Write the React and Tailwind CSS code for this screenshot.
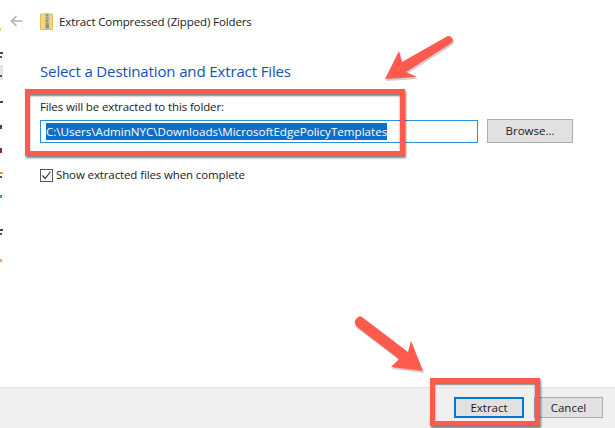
import React from 'react';

const FONT = "font-['Open_Sans','Noto_Sans',sans-serif]";

// bits of the window behind, visible on the left edge
const SPECKS = [
  { top: 28, w: 1, h: 3, color: '#f5d060' },
  { top: 52, w: 3, h: 2, color: '#444444' },
  { top: 56, w: 2, h: 2, color: '#555555' },
  { top: 65, w: 3, h: 15, color: '#e4e4e4' },
  { top: 75, w: 2, h: 2, color: '#555555' },
  { top: 101, w: 3, h: 2, color: '#444444' },
  { top: 125, w: 2, h: 4, color: '#6a2a7a' },
  { top: 148, w: 2, h: 5, color: '#8a1f4a' },
  { top: 172, w: 3, h: 2, color: '#e0a030' },
  { top: 176, w: 2, h: 2, color: '#555555' },
  { top: 195, w: 2, h: 3, color: '#4a90d9' },
  { top: 229, w: 3, h: 2, color: '#444444' },
  { top: 233, w: 2, h: 2, color: '#555555' },
  { top: 259, w: 2, h: 3, color: '#f0b040' },
];

function ZipIcon() {
  return (
    <svg width="13" height="17" viewBox="0 0 13 17" className="shrink-0">
      <path d="M0.5 1 H12.5 V16.5 H0.5 Z" fill="#f9d976" stroke="#e2bd5c" strokeWidth="1" />
      <rect x="5" y="0.5" width="4.5" height="16" fill="#b9b9b0" />
      <path d="M6 2h2M6.5 5h2M6 8h2M6.5 11h2" stroke="#6f6f68" strokeWidth="1.2" />
      <rect x="5.8" y="11.5" width="3" height="3.5" fill="#8c8c84" />
    </svg>
  );
}

function BackArrow() {
  return (
    <svg width="13" height="12" viewBox="0 0 13 12" className="shrink-0">
      <path d="M12.5 6 H1.5 M6.5 1 L1.5 6 L6.5 11" fill="none" stroke="#b4b4b4" strokeWidth="1.7" />
    </svg>
  );
}

// red callout arrow
function Callout({ className, width, height, d }) {
  return (
    <svg width={width} height={height} viewBox={`0 0 ${width} ${height}`} className={className}>
      <path d={d} fill="#8a8a8a" opacity="0.4" transform="translate(1 2)" />
      <path d={d} fill="#ff5a4e" />
    </svg>
  );
}

export default function App() {
  return (
    <div className={`${FONT} relative w-[615px] h-[428px] overflow-hidden bg-white flex flex-col text-[#1a1a1a]`}>
      <div className="flex-1 pl-[10px] pt-[12px]">
        <div className="flex items-center h-[18px]">
          <BackArrow />
          <div className="ml-[17px]"><ZipIcon /></div>
          <span className="ml-[6px] mt-[1px] text-[11.5px] tracking-[-0.12px] leading-none whitespace-nowrap">Extract Compressed (Zipped) Folders</span>
        </div>

        <div className="pl-[30px]">
          <h1 className="mt-[31px] text-[15px] tracking-[-0.13px] leading-[20px] text-[#1450b8] whitespace-nowrap">Select a Destination and Extract Files</h1>
          <p className="mt-[18px] text-[11.5px] tracking-[-0.13px] leading-[16px] whitespace-nowrap">Files will be extracted to this folder:</p>

          <div className="mt-[4px] flex items-center">
            <div className="w-[438px] h-[23px] border border-[#2b8fe0] flex items-center pl-[5px]">
              <span className="bg-[#0f6fc6] text-white text-[11.6px] leading-[17px] whitespace-nowrap">C:\Users\AdminNYC\Downloads\MicrosoftEdgePolicyTemplates</span>
            </div>
            <button className="ml-[9px] w-[86px] h-[24px] bg-[#e1e1e1] border border-[#adadad] text-[11.5px]">Browse...</button>
          </div>

          <label className="mt-[24px] flex items-center">
            <span className="w-[13px] h-[13px] border border-[#555] flex items-center justify-center">
              <svg width="11" height="11" viewBox="0 0 11 11">
                <path d="M1.5 5.5 L4.2 8.5 L9.5 1.5" fill="none" stroke="#333" strokeWidth="1.2" />
              </svg>
            </span>
            <span className="ml-[3px] text-[11.5px] tracking-[-0.12px] leading-[16px] whitespace-nowrap">Show extracted files when complete</span>
          </label>
        </div>
      </div>

      <div className="h-[41px] bg-[#f0f0f0] border-t border-[#dfdfdf] flex items-start justify-end pt-[9px] pr-[12px] gap-[10px]">
        <button className="w-[70px] h-[21px] bg-[#e1e1e1] border-2 border-[#0078d7] text-[11.5px] leading-none">Extract</button>
        <button className="w-[69px] h-[21px] bg-[#e1e1e1] border border-[#adadad] text-[11.5px] leading-none">Cancel</button>
      </div>

      {/* annotations on top of the dialog */}
      <div className="absolute left-[25px] top-[89px] w-[380px] h-[67px] border-[5px] border-[#ff5a4e] shadow-[1px_2px_2px_rgba(0,0,0,0.5),inset_0_2px_2px_rgba(0,0,0,0.5)]" />
      <div className="absolute left-[430px] top-[378px] w-[110px] h-[48px] border-[5px] border-[#ff5a4e] shadow-[1px_2px_2px_rgba(0,0,0,0.5),inset_0_2px_2px_rgba(0,0,0,0.5)]" />
      <Callout
        className="absolute left-[380px] top-[34px]"
        width={76}
        height={50}
        d="M68 2 Q72 2 73 6 Q73 8 70 10 L26 38 L37 43 L5 45 L19 17 L22 28 L66 3 Z"
      />
      <Callout
        className="absolute left-[352px] top-[314px]"
        width={78}
        height={62}
        d="M10 3 L56 38 L59 27 L71 57 L39 53 L47 45 L5 13 Q1 8 4 5 Q7 1 10 3 Z"
      />

      {SPECKS.map((s) => (
        <div
          key={s.top}
          className="absolute left-0"
          style={{ top: s.top, width: s.w, height: s.h, backgroundColor: s.color }}
        />
      ))}
    </div>
  );
}
